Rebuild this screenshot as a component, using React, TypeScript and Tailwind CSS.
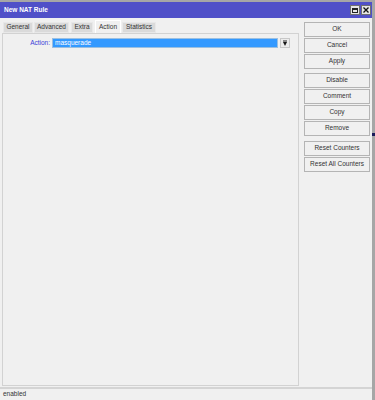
import React from "react";

const tabs = [
  { label: "General", w: "w-[30px]", active: false },
  { label: "Advanced", w: "w-[35px]", active: false },
  { label: "Extra", w: "w-[22px]", active: false },
  { label: "Action", w: "w-[26px]", active: true },
  { label: "Statistics", w: "w-[34px]", active: false },
];

function Btn({ label }: { label: string }) {
  return (
    <div className="h-[15px] w-[66px] border border-[#b4b4b4] bg-[#f0f0f0] flex items-center justify-center text-[#333] text-[6.5px] leading-none whitespace-nowrap">
      {label}
    </div>
  );
}

export default function App() {
  return (
    <div className="w-[375px] h-[400px] bg-[#a6a6a6] pt-[2px] font-['Liberation_Sans',Arial,sans-serif] text-[6.5px] overflow-hidden relative">
      <div className="absolute right-0 top-[133px] w-[3px] h-[3px] bg-[#1a1a5a]" />
      <div className="w-[372px] h-[398px] bg-[#f0f0f0] flex flex-col">
        {/* title bar */}
        <div className="h-[16px] bg-[#5050c8] flex items-center justify-between pl-[4px] pr-[1px]">
          <span className="text-white font-bold text-[6.5px] leading-none whitespace-nowrap">New NAT Rule</span>
          <div className="flex gap-[1px]">
            <div className="w-[10px] h-[10px] bg-[#e6e6e6] border border-[#707070] flex items-center justify-center">
              <div className="w-[6px] h-[5px] border border-[#222] border-t-2" />
            </div>
            <div className="w-[10px] h-[10px] bg-[#e6e6e6] border border-[#707070] flex items-center justify-center">
              <svg width="6" height="6" viewBox="0 0 6 6">
                <path d="M0.5 0.5 L5.5 5.5 M5.5 0.5 L0.5 5.5" stroke="#111" strokeWidth="1.3" />
              </svg>
            </div>
          </div>
        </div>
        {/* body */}
        <div className="flex flex-1 min-h-0">
          <div className="ml-[2px] w-[297px] flex flex-col pt-[2px]">
            <div className="flex items-end h-[13px] gap-[1px] pl-[1px]">
              {tabs.map((t, i) => (
                <div
                  key={t.label}
                  className={
                    (t.active
                      ? "h-[13px] bg-[#f0f0f0] border-t border-l border-r border-[#ffffff] "
                      : "h-[11px] bg-[#dadada] border border-[#e8e8e8] ") +
                    t.w +
                    (i === 2 || i === 3 ? " ml-[1px]" : "") +
                    " flex items-center justify-center text-[#333] leading-none whitespace-nowrap"
                  }
                >
                  {t.label}
                </div>
              ))}
            </div>
            <div className="flex-1 border border-[#d2d2d2] bg-[#f0f0f0] pt-[4px]">
              <div className="flex items-center h-[10px]">
                <div className="w-[49px] text-right text-[#3c3cd8] leading-none pr-[2px] whitespace-nowrap">Action:</div>
                <div className="w-[226px] h-[10px] bg-[#3399ff] border border-[#9bbfe0] flex items-center pl-[2px] text-white leading-none whitespace-nowrap">
                  masquerade
                </div>
                <div className="ml-[2px] w-[10px] h-[10px] bg-[#ececec] border border-[#c8c8c8] flex items-center justify-center">
                  <svg width="6" height="6" viewBox="0 0 6 6">
                    <path d="M1 1 H5 M1.5 2.5 H4.5 L3 4.5 Z M3 2.5 V5.5" stroke="#111" strokeWidth="0.9" fill="#111" />
                  </svg>
                </div>
              </div>
            </div>
          </div>
          <div className="ml-[5px] pt-[4px] flex flex-col">
            <div className="flex flex-col gap-[1px]">
              <Btn label="OK" />
              <Btn label="Cancel" />
              <Btn label="Apply" />
            </div>
            <div className="flex flex-col gap-[1px] mt-[4px]">
              <Btn label="Disable" />
              <Btn label="Comment" />
              <Btn label="Copy" />
              <Btn label="Remove" />
            </div>
            <div className="flex flex-col gap-[1px] mt-[5px]">
              <Btn label="Reset Counters" />
              <Btn label="Reset All Counters" />
            </div>
          </div>
        </div>
        {/* status bar */}
        <div className="h-[13px] mt-[1px] border-t-2 border-[#d4d4d4] flex items-center pl-[3px] text-[#333] leading-none whitespace-nowrap">
          enabled
        </div>
      </div>
    </div>
  );
}
